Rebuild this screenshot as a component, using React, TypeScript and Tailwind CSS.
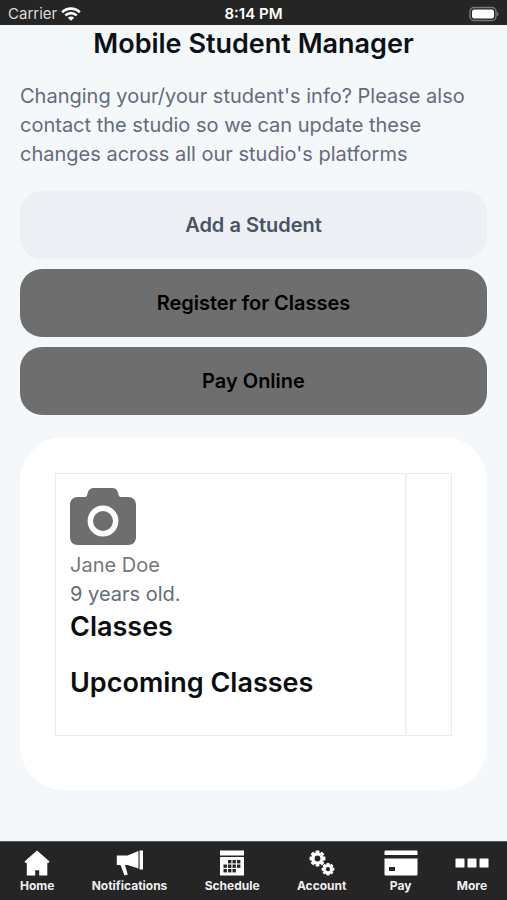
import type { ReactNode } from "react";

const students = [{ name: "Jane Doe", age: "9 years old." }];

function WifiIcon() {
  return (
    <svg className="h-4 w-5" viewBox="0 0 20 16" fill="none" stroke="#fff" aria-hidden="true">
      <path d="M1.2 6.2C6.2 1.4 13.8 1.4 18.8 6.2" strokeWidth="2.6" />
      <path d="M4.3 9.4C7.6 6.300 12.400 6.300 15.700 9.400" strokeWidth="2.6" />
      <path d="M10 14.800 6.800 11.700c1.800-1.700 4.600-1.700 6.400 0Z" fill="#fff" stroke="none" />
    </svg>
  );
}

function BatteryIcon() {
  return (
    <svg className="h-4 w-8" viewBox="0 0 32 16" aria-hidden="true">
      <rect x="3" y="1.500" width="26" height="13" rx="4" fill="none" stroke="#77787a" strokeWidth="1.500" />
      <rect x="5" y="3.500" width="22" height="9" rx="2.200" fill="#fff" />
      <path d="M30 5.800c2 .8 2 3.600 0 4.400Z" fill="#77787a" />
    </svg>
  );
}

function CameraIcon() {
  return (
    <svg className="h-[57px] w-[66px]" viewBox="0 0 66 57" aria-hidden="true">
      <path
        d="M8 9h6.500c1.500 0 2.300-.5 2.600-2l.7-2.500C18.800 1.400 20.800 0 24 0h18c3.200 0 5.200 1.400 6 4.500l.7 2.500c.3 1.500 1 2 2.500 2H58c5 0 8 3 8 8v32c0 5-3 8-8 8H8c-5 0-8-3-8-8V17c0-5 3-8 8-8Z"
        fill="#6e6e6e"
      />
      <circle cx="33" cy="33" r="12.700" fill="none" stroke="#fff" strokeWidth="5.400" />
    </svg>
  );
}

function HomeIcon() {
  return (
    <svg className="h-[26px] w-[26px]" viewBox="0 0 26 26" fill="#fff" aria-hidden="true">
      <path d="M13 .5 25.500 11.500 24.300 13H23.300V25.500H15.200V20.300H11.200V25.500H2.800V13H1.700L.5 11.500Z" />
    </svg>
  );
}

function MegaphoneIcon() {
  return (
    <svg className="h-[26px] w-[28px]" viewBox="0 0 28 26" fill="#fff" aria-hidden="true">
      <path d="M.8 5.500H11.500L22.500 1V18.500L11.500 15H9L11.800 24.500 8.500 25.500 4.500 15H.8Z" />
      <path d="M23.600.5H27V19.500H23.600Z" />
    </svg>
  );
}

const calendarDots = [
  [9, 10], [13.5, 10], [18, 10],
  [4.5, 14.5], [9, 14.5], [13.5, 14.5], [18, 14.5],
  [4.5, 19], [9, 19], [13.5, 19],
];

function CalendarIcon() {
  return (
    <svg className="h-[26px] w-[26px]" viewBox="0 0 26 26" fill="#fff" aria-hidden="true">
      <path d="M1 .5H25V5.500H1ZM1 7H25V25.500H1Z" />
      {calendarDots.map(([x, y]) => (
        <rect key={`${x}-${y}`} x={x} y={y} width="3.400" height="3.400" fill="#252525" />
      ))}
    </svg>
  );
}

const teeth = [0, 45, 90, 135, 180, 225, 270, 315];

function GearsIcon() {
  return (
    <svg className="h-[26px] w-[26px]" viewBox="0 0 26 26" fill="#fff" aria-hidden="true">
      <g transform="translate(8.500 8.500)">
        {teeth.map((a) => (
          <rect key={a} x="-1.900" y="-7.900" width="3.800" height="4" rx="0.600" transform={`rotate(${a})`} />
        ))}
        <circle r="4.500" fill="none" stroke="#fff" strokeWidth="3.200" />
      </g>
      <g transform="translate(19 19.200)">
        {teeth.map((a) => (
          <rect key={a} x="-1.500" y="-6.300" width="3" height="3" rx="0.500" transform={`rotate(${a})`} />
        ))}
        <circle r="3.500" fill="none" stroke="#fff" strokeWidth="2.800" />
      </g>
    </svg>
  );
}

function CardIcon() {
  return (
    <svg className="h-[26px] w-[34px]" viewBox="0 0 34 26" fill="#fff" aria-hidden="true">
      <path d="M1.500.5h31q1 0 1 1V5H.5V1.500q0-1 1-1ZM.5 8.500h33V24.500q0 1-1 1h-31q-1 0-1-1Z" />
      <rect x="5" y="17" width="6" height="4" fill="#252525" />
    </svg>
  );
}

function MoreIcon() {
  return (
    <svg className="h-[26px] w-[34px]" viewBox="0 0 34 26" fill="#fff" aria-hidden="true">
      <rect x="0.500" y="8.500" width="9" height="9" rx="0.500" />
      <rect x="12.500" y="8.500" width="9" height="9" rx="0.500" />
      <rect x="24.500" y="8.500" width="9" height="9" rx="0.500" />
    </svg>
  );
}

const tabs: { label: string; icon: ReactNode }[] = [
  { label: "Home", icon: <HomeIcon /> },
  { label: "Notifications", icon: <MegaphoneIcon /> },
  { label: "Schedule", icon: <CalendarIcon /> },
  { label: "Account", icon: <GearsIcon /> },
  { label: "Pay", icon: <CardIcon /> },
  { label: "More", icon: <MoreIcon /> },
];

export default function App() {
  return (
    <div className="flex min-h-screen flex-col bg-[#f4f8fb] font-['Inter','Liberation_Sans',sans-serif]">
      <header className="grid h-[25px] grid-cols-3 items-center bg-[#252525] px-2 pt-0.5 text-[15px] leading-5 text-white">
        <div className="flex items-center gap-1 text-[#dcdcdc]">
          <span>Carrier</span>
          <WifiIcon />
        </div>
        <time className="text-center font-semibold">8:14 PM</time>
        <div className="flex justify-end">
          <BatteryIcon />
        </div>
      </header>

      <main className="flex-1 px-5 pt-px">
        <h1 className="text-center text-[27px] leading-9 font-semibold text-[#0c1116]">Mobile Student Manager</h1>
        <p className="mt-5 text-xl leading-[29px] text-[#646b7a]">
          Changing your/your student's info? Please also contact the studio so we can update these changes across all
          our studio's platforms
        </p>

        <div className="mt-[22px] flex flex-col gap-2.5 text-xl font-semibold">
          <button type="button" className="h-[68px] rounded-[22px] bg-[#ecf0f4] text-[#4b5261]">
            Add a Student
          </button>
          <button type="button" className="h-[68px] rounded-[22px] bg-[#6e6e6e] text-black">
            Register for Classes
          </button>
          <button type="button" className="h-[68px] rounded-[22px] bg-[#6e6e6e] text-black">
            Pay Online
          </button>
        </div>

        <section className="mt-[22px] rounded-[44px] bg-white px-[35px] pt-9 pb-[54px]">
          <table className="w-full border-collapse border border-[#e9ebec]">
            <tbody>
              {students.map((student) => (
                <tr key={student.name}>
                  <td className="border-r-2 border-[#eeeff0] p-3.5 align-top">
                    <CameraIcon />
                    <div className="mt-1.5 text-xl leading-[29px] text-[#77777a]">{student.name}</div>
                    <div className="text-xl leading-[29px] text-[#646b7a]">{student.age}</div>
                    <h2 className="mb-5 text-[27px] leading-9 font-semibold text-[#0c0d10]">Classes</h2>
                    <h2 className="mb-5 text-[27px] leading-9 font-semibold text-[#0c0d10]">Upcoming Classes</h2>
                  </td>
                  <td className="w-[46px]" />
                </tr>
              ))}
            </tbody>
          </table>
        </section>
      </main>

      <nav className="flex h-[59px] justify-between border-t border-[#55585a] bg-[#252525] pt-2 pr-[18px] pl-5">
        {tabs.map((tab) => (
          <button key={tab.label} type="button" className="flex flex-col items-center text-xs font-bold text-[#f0f0f0]">
            {tab.icon}
            <span className="mt-0.5">{tab.label}</span>
          </button>
        ))}
      </nav>
    </div>
  );
}
